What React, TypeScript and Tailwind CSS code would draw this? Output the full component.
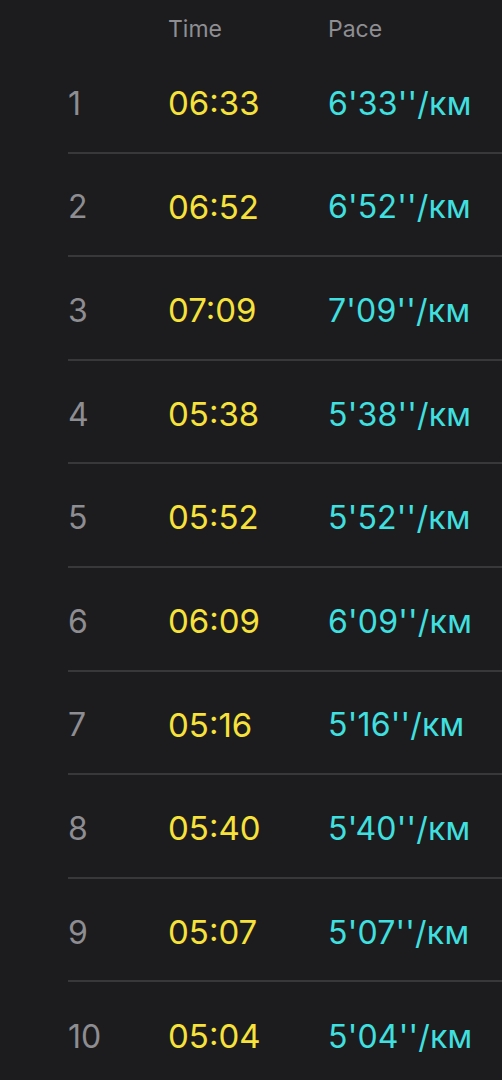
import React from 'react'

interface Split {
  km: number
  time: string
  pace: string
}

const SPLITS: Split[] = [
  { km: 1, time: '06:33', pace: "6'33''/км" },
  { km: 2, time: '06:52', pace: "6'52''/км" },
  { km: 3, time: '07:09', pace: "7'09''/км" },
  { km: 4, time: '05:38', pace: "5'38''/км" },
  { km: 5, time: '05:52', pace: "5'52''/км" },
  { km: 6, time: '06:09', pace: "6'09''/км" },
  { km: 7, time: '05:16', pace: "5'16''/км" },
  { km: 8, time: '05:40', pace: "5'40''/км" },
  { km: 9, time: '05:07', pace: "5'07''/км" },
  { km: 10, time: '05:04', pace: "5'04''/км" },
]

export default function App() {
  return (
    <div
      className="h-[1080px] w-[502px] overflow-hidden bg-[#1c1c1e]"
      style={{ fontFamily: 'Inter, "Noto Sans", sans-serif' }}
    >
      {/* Header */}
      <div className="flex h-[50px] items-center pl-[168px] pt-[8px] text-[23px] text-[#8e8e93]">
        <div className="w-[160px]">Time</div>
        <div>Pace</div>
      </div>

      {/* Splits */}
      {SPLITS.map((split, i) => (
        <div key={split.km} className="flex h-[103.6px] flex-col">
          <div className="flex flex-1 items-center pl-[68px] pt-[6px] text-[32px]">
            <div className="w-[100px] text-[#8d8d92]">{split.km}</div>
            <div className="w-[160px] text-[33px] text-[#f6e23b]">{split.time}</div>
            <div className="tracking-[0.2px] text-[#40e0e0]">{split.pace}</div>
          </div>
          {i < SPLITS.length - 1 && <div className="ml-[68px] h-[2px] bg-[#38383a]" />}
        </div>
      ))}
    </div>
  )
}
